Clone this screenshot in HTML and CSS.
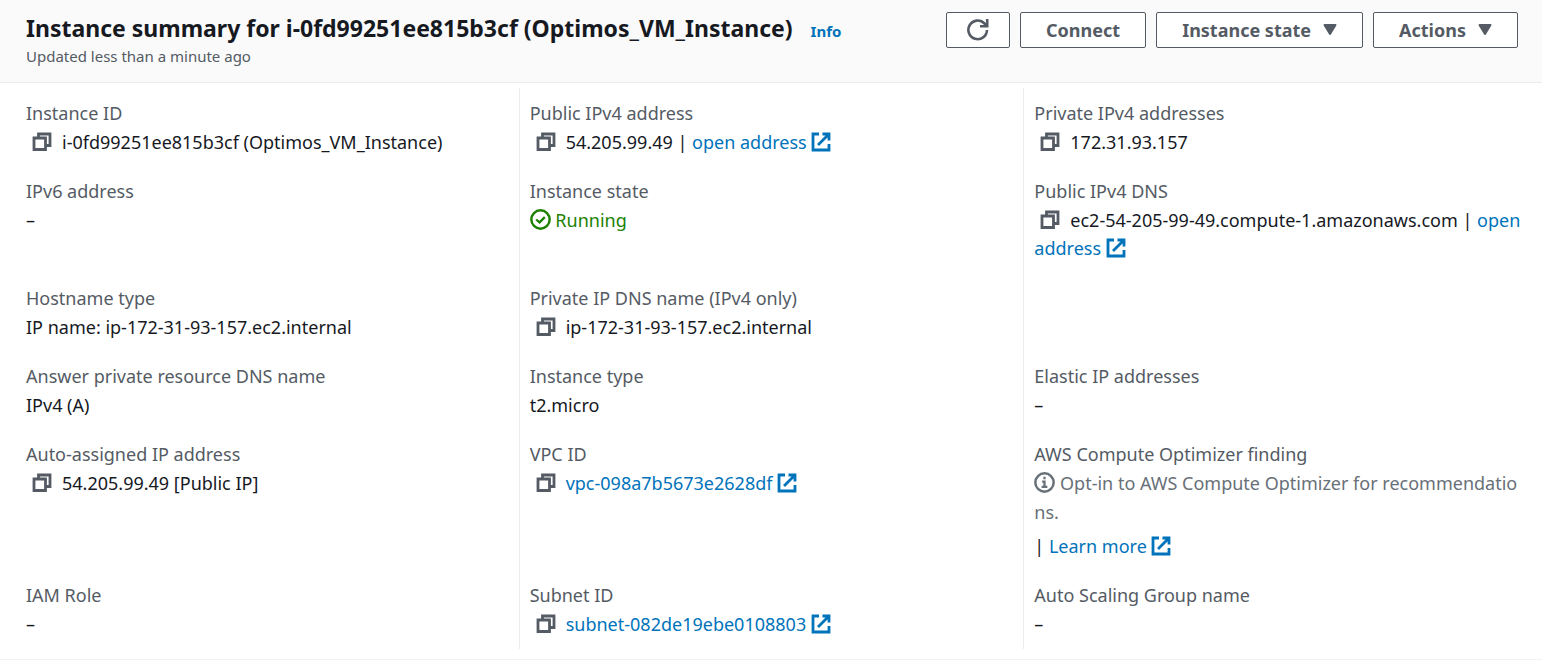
FILE: index.html
```html
<!DOCTYPE html>
<html lang="en">
<head>
<meta charset="utf-8">
<title>Instance summary</title>
<link rel="stylesheet" href="styles.css">
</head>
<body>
<svg class="defs" aria-hidden="true">
  <symbol id="copy" viewBox="0 0 20 20"><path d="M2 6h11.500v11.500H2zM6.500 6V2H18v11.500h-4.500" fill="none" stroke="currentColor" stroke-width="2.800"/></symbol>
  <symbol id="external" viewBox="0 0 20 20"><path d="M8 2H2v16h16v-6M11.500 2H18v6.500M17.500 2.500L7 13" fill="none" stroke="currentColor" stroke-width="2.800"/></symbol>
  <symbol id="caret" viewBox="0 0 14 12"><path d="M1.500 1h11L7 10z" fill="currentColor" stroke="currentColor" stroke-width="2" stroke-linejoin="round"/></symbol>
</svg>
<main class="panel">
  <header class="header">
    <div class="heading">
      <div class="title-row">
        <h1 class="title">Instance summary for i-0fd99251ee815b3cf (Optimos_VM_Instance)</h1>
        <a class="info" href="#">Info</a>
      </div>
      <p class="updated">Updated less than a minute ago</p>
    </div>
    <div class="actions">
      <button class="button refresh" type="button" aria-label="Refresh"><svg class="refresh-icon" viewBox="0 0 24 24"><path d="M21 12A9.300 9.300 0 1 1 18.500 5.500L21 8" fill="none" stroke="currentColor" stroke-width="2.600"/><path d="M21.200 1v7.300H14" fill="none" stroke="currentColor" stroke-width="2.600"/></svg></button>
      <button class="button" type="button">Connect</button>
      <button class="button" type="button">Instance state <svg class="caret"><use href="#caret"/></svg></button>
      <button class="button" type="button">Actions <svg class="caret"><use href="#caret"/></svg></button>
    </div>
  </header>
  <section class="grid">
    <dl class="column">
      <div class="field"><dt>Instance ID</dt><dd><button class="copy" type="button" aria-label="Copy"><svg class="icon"><use href="#copy"/></svg></button>i-0fd99251ee815b3cf (Optimos_VM_Instance)</dd></div>
      <div class="field"><dt>IPv6 address</dt><dd>–</dd></div>
      <div class="field"><dt>Hostname type</dt><dd>IP name: ip-172-31-93-157.ec2.internal</dd></div>
      <div class="field"><dt>Answer private resource DNS name</dt><dd>IPv4 (A)</dd></div>
      <div class="field"><dt>Auto-assigned IP address</dt><dd><button class="copy" type="button" aria-label="Copy"><svg class="icon"><use href="#copy"/></svg></button>54.205.99.49 [Public IP]</dd></div>
      <div class="field"><dt>IAM Role</dt><dd>–</dd></div>
    </dl>
    <dl class="column">
      <div class="field"><dt>Public IPv4 address</dt><dd><button class="copy" type="button" aria-label="Copy"><svg class="icon"><use href="#copy"/></svg></button>54.205.99.49 | <a href="#">open address <svg class="icon"><use href="#external"/></svg></a></dd></div>
      <div class="field"><dt>Instance state</dt><dd class="running"><svg class="status" viewBox="0 0 22 22"><path d="M6.500 11l3.500 3 5.500-5.500" fill="none" stroke="currentColor" stroke-width="2.400"/><circle cx="11" cy="11" r="9.600" fill="none" stroke="currentColor" stroke-width="2.600"/></svg> Running</dd></div>
      <div class="field"><dt>Private IP DNS name (IPv4 only)</dt><dd><button class="copy" type="button" aria-label="Copy"><svg class="icon"><use href="#copy"/></svg></button>ip-172-31-93-157.ec2.internal</dd></div>
      <div class="field"><dt>Instance type</dt><dd>t2.micro</dd></div>
      <div class="field"><dt>VPC ID</dt><dd><button class="copy" type="button" aria-label="Copy"><svg class="icon"><use href="#copy"/></svg></button><a href="#">vpc-098a7b5673e2628df <svg class="icon"><use href="#external"/></svg></a></dd></div>
      <div class="field"><dt>Subnet ID</dt><dd><button class="copy" type="button" aria-label="Copy"><svg class="icon"><use href="#copy"/></svg></button><a href="#">subnet-082de19ebe0108803 <svg class="icon"><use href="#external"/></svg></a></dd></div>
    </dl>
    <dl class="column">
      <div class="field"><dt>Private IPv4 addresses</dt><dd><button class="copy" type="button" aria-label="Copy"><svg class="icon"><use href="#copy"/></svg></button>172.31.93.157</dd></div>
      <div class="field"><dt>Public IPv4 DNS</dt><dd><button class="copy" type="button" aria-label="Copy"><svg class="icon"><use href="#copy"/></svg></button>ec2-54-205-99-49.compute-1.amazonaws.com | <a href="#">open address <svg class="icon"><use href="#external"/></svg></a></dd></div>
      <div class="field empty"></div>
      <div class="field"><dt>Elastic IP addresses</dt><dd>–</dd></div>
      <div class="field"><dt>AWS Compute Optimizer finding</dt><dd><p class="finding"><svg class="status" viewBox="0 0 22 22"><circle cx="11" cy="11" r="9.600" fill="none" stroke="currentColor" stroke-width="2.600"/><path d="M11 5v2.500M8.500 10H11v5M8 15.500h6" fill="none" stroke="currentColor" stroke-width="2.400"/></svg> Opt-in to AWS Compute Optimizer for recommendations.</p><p class="learn">| <a href="#">Learn more <svg class="icon"><use href="#external"/></svg></a></p></dd></div>
      <div class="field"><dt>Auto Scaling Group name</dt><dd>–</dd></div>
    </dl>
  </section>
</main>
</body>
</html>
```
FILE: styles.css
```css
* { box-sizing: border-box; }
body { margin: 0; background: #fff; color: #16191f; font: 18px/28px "Noto Sans", sans-serif; }
h1, p, dl, dt, dd { margin: 0; }
a { color: #0073bb; text-decoration: none; }
.defs { position: absolute; width: 0; height: 0; }
.panel { border-bottom: 1px solid #f2f3f3; }
.header { display: flex; justify-content: space-between; padding: 11px 24px 15px 26px; background: #fafafa; border-bottom: 1px solid #eaeded; }
.title-row { display: flex; align-items: baseline; gap: 18px; }
.title { font-size: 23px; line-height: 34px; font-weight: 700; }
.info { font-size: 15px; font-weight: 700; }
.updated { font-size: 15px; line-height: 22px; color: #545b64; }
.actions { display: flex; align-items: flex-start; gap: 10px; padding-top: 1px; }
.button { display: flex; align-items: center; gap: 12px; height: 36px; padding: 0 25px; border: 1px solid #545b64; border-radius: 2px; background: #fff; color: #545b64; font: 700 18px/28px "Noto Sans", sans-serif; white-space: nowrap; }
.refresh { padding: 0 19px; }
.refresh-icon { width: 24px; height: 24px; }
.caret { width: 14px; height: 12px; }
.grid { display: grid; grid-template-columns: 1fr 1fr 1fr; grid-template-rows: 89px 107px 78px 78px 141px 68px; padding: 5px 14px 10px; }
.column { display: grid; grid-row: 1 / -1; grid-template-rows: subgrid; padding: 11px 0 0 10px; }
.column:first-child { padding-left: 12px; }
.column + .column { border-left: 1px solid #eaeded; }
dt { line-height: 29px; color: #545b64; }
dd { overflow-wrap: anywhere; }
.copy { padding: 0; margin: 0 10px 0 6px; border: 0; background: none; color: #545b64; vertical-align: -3px; line-height: 0; }
.icon { width: 20px; height: 20px; vertical-align: -3px; }
.copy .icon { display: block; }
.status { width: 21px; height: 21px; vertical-align: -3px; }
.running { color: #1d8102; }
.finding { color: #687078; line-height: 29px; word-break: break-all; }
.learn { margin-top: 5px; }
```
